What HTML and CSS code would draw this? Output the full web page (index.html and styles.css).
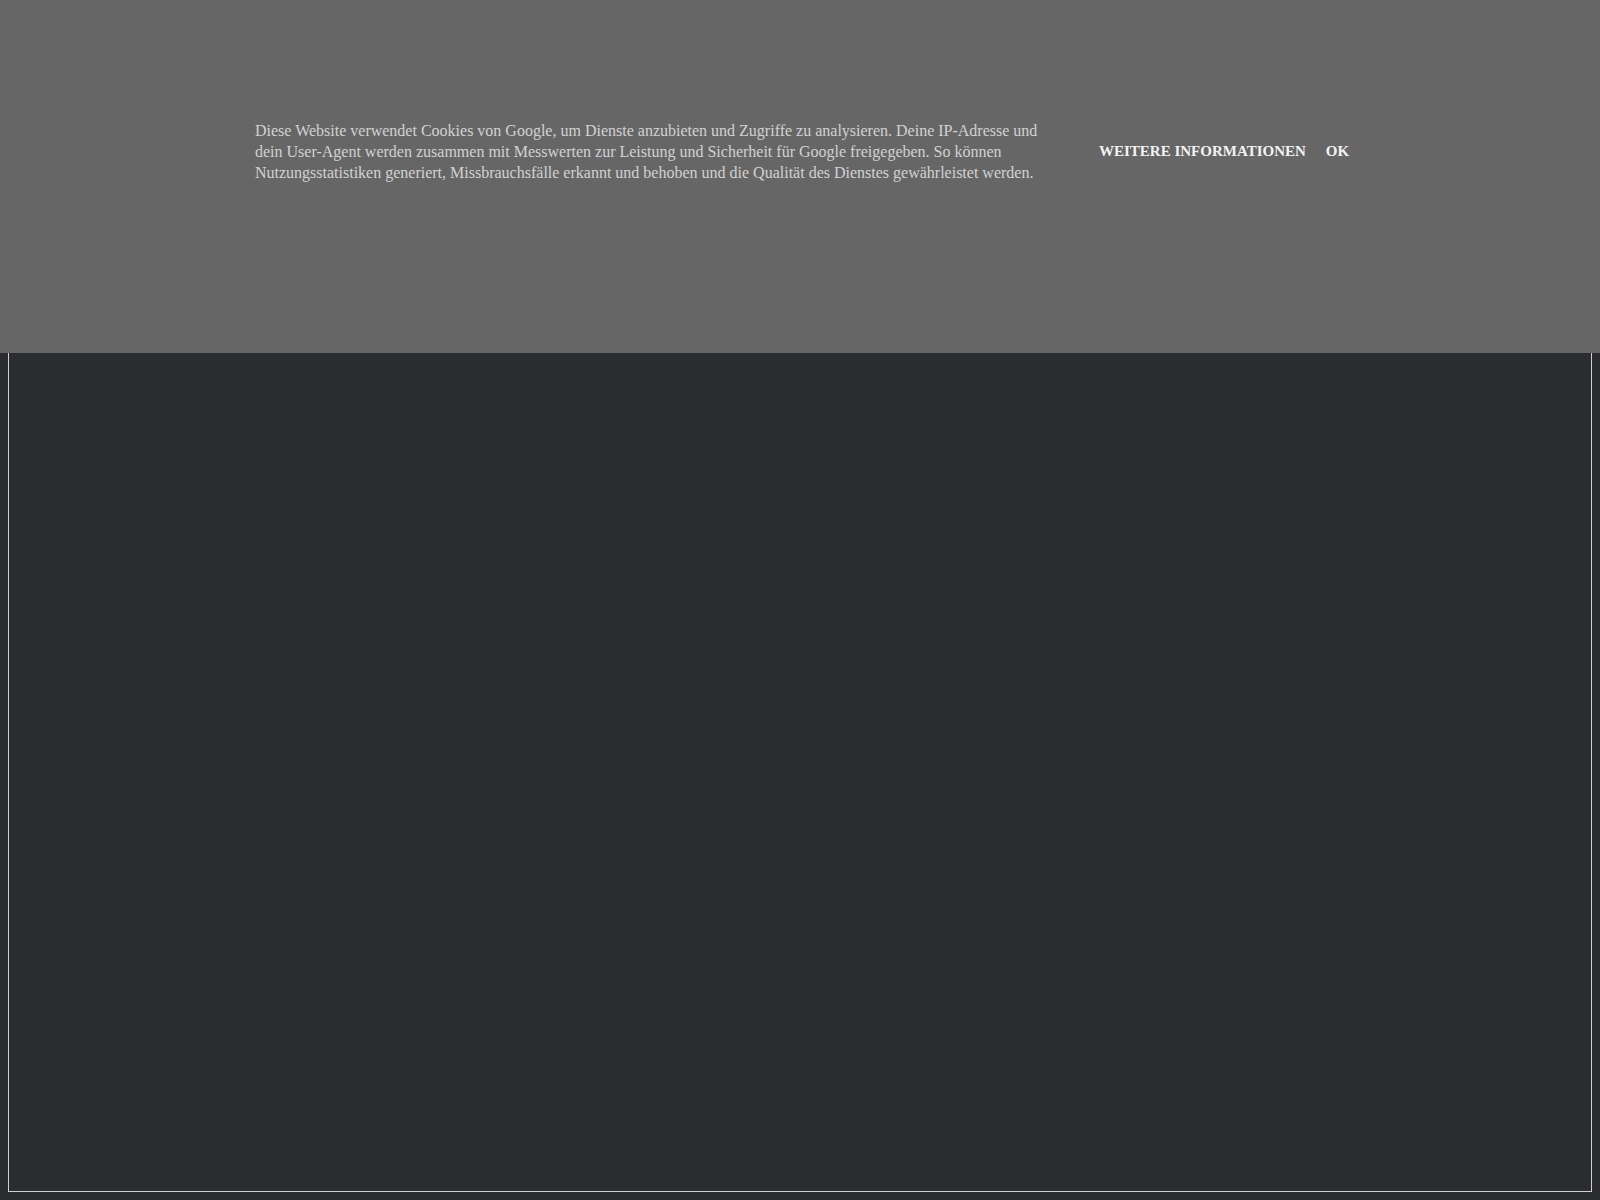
FILE: index.html
```html
<!DOCTYPE html>
<html lang="de">
<head>
<meta charset="utf-8">
<title>Cookies</title>
<link rel="stylesheet" href="styles.css">
</head>
<body>
<div class="page"></div>
<div class="cookie-bar">
  <div class="cookie-inner">
    <p class="cookie-text">Diese Website verwendet Cookies von Google, um Dienste anzubieten und Zugriffe zu analysieren. Deine IP-Adresse und dein User-Agent werden zusammen mit Messwerten zur Leistung und Sicherheit für Google freigegeben. So können Nutzungsstatistiken generiert, Missbrauchsfälle erkannt und behoben und die Qualität des Dienstes gewährleistet werden.</p>
    <div class="cookie-buttons">
      <a class="cookie-btn" href="#">Weitere Informationen</a>
      <a class="cookie-btn" href="#">Ok</a>
    </div>
  </div>
</div>
</body>
</html>
```
FILE: styles.css
```css
body {
  margin: 8px;
  background: #2b2c30;
  font-family: "Liberation Serif", "Times New Roman", serif;
}
.page {
  box-sizing: border-box;
  height: calc(100vh - 16px);
  border: 1px solid #cfcfcf;
}
.cookie-bar {
  position: fixed;
  top: 0;
  left: 0;
  right: 0;
  height: 353px;
  background: #666666;
}
.cookie-inner {
  display: flex;
  align-items: center;
  width: 1090px;
  margin: 121px auto 0;
}
.cookie-text {
  margin: 0;
  width: 800px;
  flex-shrink: 0;
  font-size: 16px;
  line-height: 20.8px;
  color: #d2d2d2;
}
.cookie-buttons {
  display: flex;
  flex-shrink: 0;
  gap: 20px;
  margin-left: 44px;
  margin-bottom: 1px;
  white-space: nowrap;
}
.cookie-btn {
  font-size: 15px;
  font-weight: bold;
  text-transform: uppercase;
  color: #f2f2f2;
  text-decoration: none;
}
```
